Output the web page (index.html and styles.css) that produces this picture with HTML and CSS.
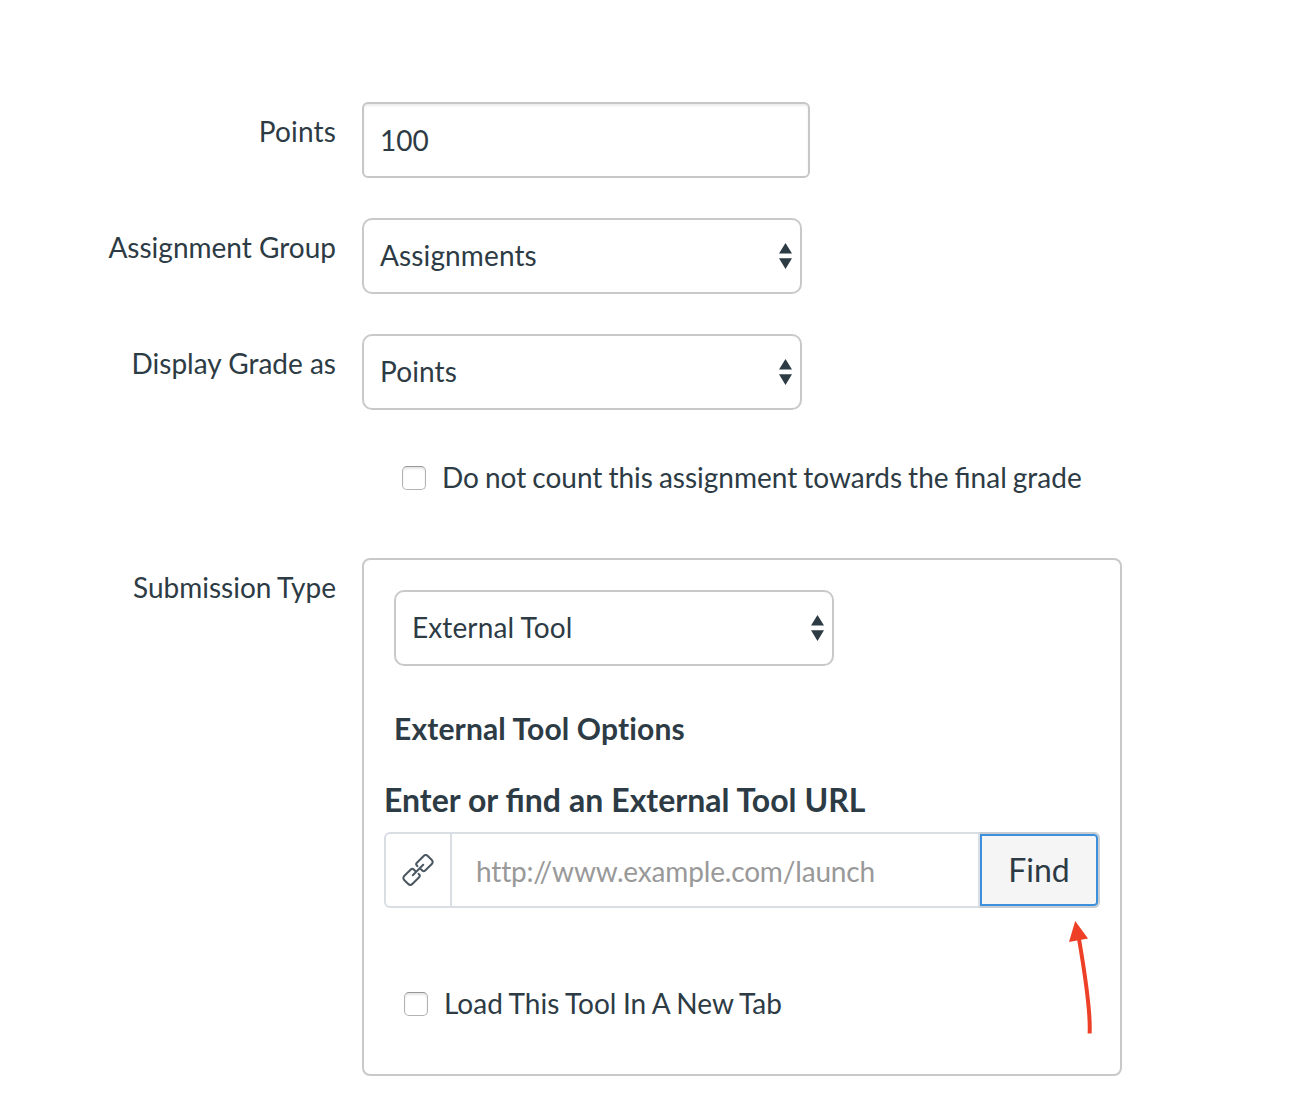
FILE: index.html
```html
<!DOCTYPE html>
<html lang="en">
<head>
<meta charset="utf-8">
<title>Assignment settings</title>
<link rel="stylesheet" href="styles.css">
</head>
<body>
<form class="form">
  <div class="row">
    <label class="label label-points" for="points">Points</label>
    <input class="text-input" id="points" type="text" value="100">
  </div>
  <div class="row">
    <span class="label">Assignment Group</span>
    <div class="select"><span>Assignments</span>
      <svg class="arrows" viewBox="0 0 13 26"><path d="M6.5 0L13 10.6H0zM0 15.2h13L6.5 26z"/></svg></div>
  </div>
  <div class="row">
    <span class="label">Display Grade as</span>
    <div class="select"><span>Points</span>
      <svg class="arrows" viewBox="0 0 13 26"><path d="M6.5 0L13 10.6H0zM0 15.2h13L6.5 26z"/></svg></div>
  </div>
  <label class="check check-grade"><input class="box" type="checkbox"><span>Do not count this assignment towards the final grade</span></label>
  <div class="row">
    <span class="label label-tight">Submission Type</span>
    <section class="panel">
      <div class="select select-tool"><span>External Tool</span>
        <svg class="arrows" viewBox="0 0 13 26"><path d="M6.5 0L13 10.6H0zM0 15.2h13L6.5 26z"/></svg></div>
      <h3 class="options-title">External Tool Options</h3>
      <h2 class="url-title">Enter or find an External Tool URL</h2>
      <div class="url-group">
        <span class="url-icon">
          <svg class="link" viewBox="0 0 34 34">
            <path d="M16.4 13.2l-.6-.7c-.8-.9-.7-2 .1-2.8l6.5-6.5c1.5-1.5 3.1-1.5 4.6 0l3.6 3.6c1.4 1.4 1.4 3 0 4.4l-6.4 6.3c-1 1-2 1-3 0l-1.2-1.2"/>
            <path d="M17.6 20.8l.6.7c.8.9.7 2-.1 2.8l-6.5 6.5c-1.5 1.5-3.1 1.5-4.6 0l-3.6-3.6c-1.4-1.4-1.4-3 0-4.4l6.4-6.3c1-1 2-1 3 0l1.2 1.2M11.8 22.2L22.2 11.8"/>
          </svg>
        </span>
        <input class="url-input" type="text" placeholder="http://www.example.com/launch">
        <button class="find" type="button">Find</button>
      </div>
      <label class="check check-tab"><input class="box" type="checkbox"><span>Load This Tool In A New Tab</span></label>
      <svg class="pointer" viewBox="0 0 22 114"><path class="shaft" d="M10 18Q22 88 20.6 112.5"/><path class="head" d="M6.2 0L19 17.5 0 21z"/></svg>
    </section>
  </div>
</form>
</body>
</html>
```
FILE: styles.css
```css
* { box-sizing: border-box; }
body {
  margin: 0;
  background: #fff;
  color: #2d3b45;
  font: 28px/40px Lato, sans-serif;
}
.form { padding-top: 102px; }
.row {
  display: grid;
  grid-template-columns: 336px auto;
  column-gap: 26px;
  justify-content: start;
  margin-bottom: 40px;
}
.label { text-align: right; padding-top: 9px; }
.label-points { letter-spacing: .15px; }
.label-tight { word-spacing: -.8px; }
.text-input {
  width: 448px;
  height: 76px;
  padding: 0 16px 1px;
  border: 2px solid #c7c7c7;
  border-radius: 6px;
  box-shadow: inset 0 2px 2px rgba(0, 0, 0, .075);
  font: inherit;
  color: inherit;
}
.select {
  display: flex;
  align-items: center;
  justify-content: space-between;
  width: 440px;
  height: 76px;
  padding: 0 8px 0 16px;
  border: 2px solid #c9c9c9;
  border-radius: 10px;
  letter-spacing: .12px;
}
.select span { padding-bottom: 2px; }
.arrows { width: 13px; height: 26px; fill: #2d3b45; }
.check { display: flex; align-items: center; }
.check span { margin-bottom: 2px; line-height: 38px; }
.check-grade { margin: 48px 0 60px 402px; word-spacing: -1.15px; }
.box {
  appearance: none;
  width: 24px;
  height: 24px;
  margin: 0 16px 0 0;
  border: 1.5px solid #b2b2b2;
  border-top-color: #979797;
  border-radius: 5px;
  box-shadow: inset 0 2px 2px rgba(0, 0, 0, .1);
}
.panel {
  position: relative;
  width: 760px;
  height: 518px;
  padding: 30px 20px;
  border: 2px solid #c9c9c9;
  border-radius: 8px;
}
.select-tool { margin-left: 10px; }
.options-title {
  margin: 42px 0 0 10px;
  font-size: 30px;
  line-height: 40px;
  letter-spacing: .15px;
  font-variant-ligatures: none;
}
.url-title { margin: 32px 0 12px; font-size: 32px; line-height: 40px; word-spacing: .2px; }
.url-group {
  display: flex;
  width: 716px;
  height: 76px;
  border: 2px solid #d9dee5;
  border-radius: 6px;
}
.url-icon {
  display: flex;
  align-items: center;
  justify-content: center;
  width: 66px;
  border-right: 2px solid #d9dee5;
}
.link {
  width: 34px;
  height: 34px;
  fill: none;
  stroke: #4b5760;
  stroke-width: 2;
  stroke-linecap: round;
}
.url-input {
  flex: 1;
  min-width: 0;
  padding: 2px 24px 0;
  border: 0;
  font: inherit;
  letter-spacing: -.17px;
  font-variant-ligatures: none;
}
.url-input::placeholder { color: #999; }
.find {
  width: 122px;
  margin: -2px;
  padding: 0;
  border: 2px solid #c7cdd1;
  border-left-color: #d9dee5;
  border-radius: 0 6px 6px 0;
  background: #f5f5f5;
  box-shadow: inset 0 0 0 2px #3c8fdd;
  color: inherit;
  font: 32px/40px Lato, sans-serif;
}
.check-tab { margin: 76px 0 0 20px; word-spacing: -.65px; }
.pointer {
  position: absolute;
  left: 705px;
  top: 361px;
  width: 22px;
  height: 114px;
  overflow: visible;
}
.shaft { fill: none; stroke: #ee4026; stroke-width: 4; }
.head { fill: #ee4026; }
```
